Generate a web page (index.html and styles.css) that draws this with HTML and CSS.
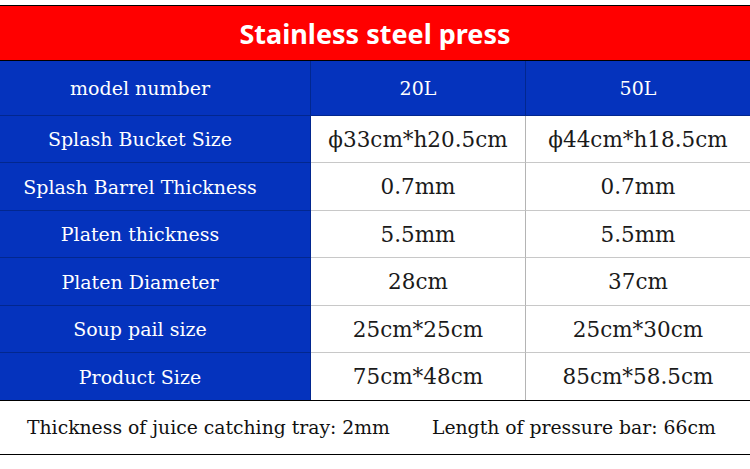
FILE: index.html
```html
<!DOCTYPE html>
<html lang="en">
<head>
    <meta charset="UTF-8">
    <meta name="viewport" content="width=device-width, initial-scale=1.0">
    <title>Stainless steel press</title>
    <link rel="stylesheet" href="styles.css">
</head>
<body>
    <div class="sheet">
        <div class="title">Stainless steel press</div>
        <div class="spec">
            <div class="cell head first">model number</div>
            <div class="cell head col">20L</div>
            <div class="cell head col">50L</div>

            <div class="cell label">Splash Bucket Size</div>
            <div class="cell val">ϕ33cm*h20.5cm</div>
            <div class="cell val">ϕ44cm*h18.5cm</div>

            <div class="cell label">Splash Barrel Thickness</div>
            <div class="cell val">0.7mm</div>
            <div class="cell val">0.7mm</div>

            <div class="cell label">Platen thickness</div>
            <div class="cell val">5.5mm</div>
            <div class="cell val">5.5mm</div>

            <div class="cell label">Platen Diameter</div>
            <div class="cell val">28cm</div>
            <div class="cell val">37cm</div>

            <div class="cell label">Soup pail size</div>
            <div class="cell val">25cm*25cm</div>
            <div class="cell val">25cm*30cm</div>

            <div class="cell label last">Product Size</div>
            <div class="cell val last">75cm*48cm</div>
            <div class="cell val last">85cm*58.5cm</div>
        </div>
        <div class="note">
            <span>Thickness of juice catching tray: 2mm</span>
            <span>Length of pressure bar: 66cm</span>
        </div>
    </div>
</body>
</html>
```

FILE: styles.css
```css
body {
    margin: 0;
    padding: 0;
    background-color: #fff;
    font-family: "DejaVu Serif", serif;
}
.sheet {
    margin-top: 5px;
    border-top: 1px solid #000;
    width: 750px;
}
.title {
    height: 54px;
    background-color: #ff0000;
    color: #fff;
    font-family: "Noto Sans", sans-serif;
    font-weight: bold;
    font-size: 27px;
    display: flex;
    align-items: center;
    justify-content: center;
    border-bottom: 1px solid #000;
}
.spec {
    display: grid;
    grid-template-columns: 311px 214px 1fr;
    grid-template-rows: 55px 47px 48px 47px 48px 47px 47px;
}
.cell {
    box-sizing: border-box;
    display: flex;
    align-items: center;
    justify-content: center;
    font-size: 19px;
    border-bottom: 1px solid #c8c8c8;
}
.head,
.label {
    background-color: #0533bd;
    color: #fff;
    border-bottom-color: #02278f;
}
.label,
.head.first {
    border-right: 1px solid #02278f;
    padding-right: 30px;
}
.head.col + .head.col {
    border-left: 1px solid #02278f;
}
.val {
    color: #1a1a1a;
    font-size: 21.5px;
}
.val + .val {
    border-left: 1px solid #b4b4b4;
}
.cell.last {
    border-bottom: none;
}
.note {
    height: 53px;
    border-top: 1px solid #000;
    border-bottom: 1px solid #000;
    display: flex;
    align-items: center;
    gap: 42px;
    padding-left: 27px;
    font-size: 18.8px;
    color: #111;
}
```
